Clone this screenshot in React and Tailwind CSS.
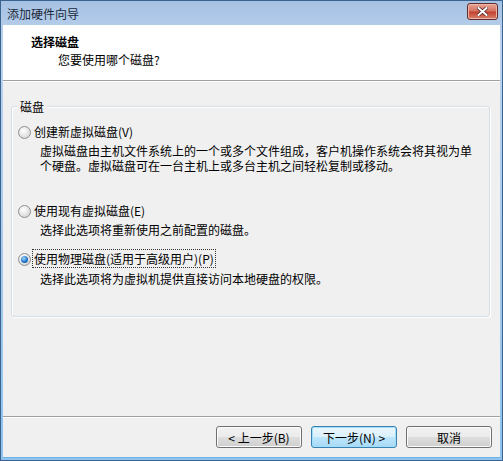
import React from "react";

function Radio({ checked }) {
  return (
    <span className="relative inline-block w-[13px] h-[13px] rounded-full border border-[#8f8f8f] bg-[radial-gradient(circle_at_40%_35%,#ffffff,#dcdcdc_70%,#c8c8c8)] shrink-0">
      {checked && (
        <span className="absolute left-[2px] top-[2px] w-[7px] h-[7px] rounded-full bg-[radial-gradient(circle_at_40%_35%,#9fd7ff,#1a6fc4_60%,#0d4f93)]" />
      )}
    </span>
  );
}

function Btn({ children, def }) {
  return (
    <div
      className={
        "w-[86px] h-[22px] rounded-[3px] border flex items-center justify-center text-[12px] leading-[15px] text-black " +
        (def
          ? "border-[#3c7fb1] bg-[linear-gradient(#eaf6fd_0%,#d9f0fc_50%,#bee6fd_51%,#a7d9f5_100%)] shadow-[inset_0_0_0_1px_#9fe0ff]"
          : "border-[#707070] bg-[linear-gradient(#f2f2f2_0%,#ebebeb_50%,#dddddd_51%,#cfcfcf_100%)] shadow-[inset_0_0_0_1px_#fcfcfc]")
      }
    >
      {children}
    </div>
  );
}

export default function App() {
  return (
    <div
      className="w-[503px] h-[461px] flex flex-col border border-[#3a6390] bg-[linear-gradient(#a5c1e3,#bcd3ee_40px,#8fc2ec_100%)] text-black"
      style={{ fontFamily: '"Noto Sans CJK SC", "Liberation Sans", sans-serif' }}
    >
      {/* title bar */}
      <div className="h-[24px] flex items-center justify-between pl-[6px] pr-[4px] shrink-0">
        <span className="text-[12px] leading-[15px] text-[#1e2a3a] pt-[1px]">添加硬件向导</span>
        <div className="w-[31px] h-[17px] mt-[-3px] rounded-[3px] border border-[#5e2a2a] bg-[linear-gradient(#e8a597_0%,#d47462_45%,#c3432f_55%,#d8806c_100%)] shadow-[inset_0_0_0_1px_#f0b7a8] flex items-center justify-center">
          <svg width="11" height="9" viewBox="0 0 11 9">
            <path d="M1.5 1 L9.5 8 M9.5 1 L1.5 8" stroke="#4a2020" strokeWidth="3.4" strokeLinecap="square" />
            <path d="M1.5 1 L9.5 8 M9.5 1 L1.5 8" stroke="#ffffff" strokeWidth="2" strokeLinecap="square" />
          </svg>
        </div>
      </div>

      {/* body */}
      <div className="flex-1 mx-[2px] mb-[2px] flex flex-col bg-[#f0f0f0] border-b border-[#6ab4e6]">
        {/* header */}
        <div className="h-[56px] bg-white border-b border-[#a0a0a0] shrink-0 pt-[9px]">
          <div className="pl-[28px] text-[12px] leading-[15px] font-bold">选择磁盘</div>
          <div className="pl-[55px] mt-[3px] text-[12px] leading-[15px]">您要使用哪个磁盘?</div>
        </div>
        <div className="h-px bg-white shrink-0" />

        {/* content */}
        <div className="flex-1 pt-[24px] pl-[8px] pr-[10px]">
          <div className="relative h-[211px] rounded-[3px] border border-[#d5dfe5] shadow-[inset_1px_1px_0_#ffffff,1px_1px_0_#ffffff] pt-[17px] pl-[8px]">
            <span className="absolute left-[5px] top-[-8px] px-[3px] bg-[#f0f0f0] text-[12px] leading-[15px]">磁盘</span>

            <div className="flex items-center gap-[2px] h-[15px]">
              <span className="ml-[-2px]"><Radio /></span>
              <span className="text-[12px] leading-[15px] ml-[1px]">创建新虚拟磁盘(V)</span>
            </div>
            <div className="mt-[4px] pl-[20px] text-[12px] leading-[15px] whitespace-nowrap">
              虚拟磁盘由主机文件系统上的一个或多个文件组成，客户机操作系统会将其视为单
            </div>
            <div className="pl-[20px] text-[12px] leading-[15px] whitespace-nowrap">
              个硬盘。虚拟磁盘可在一台主机上或多台主机之间轻松复制或移动。
            </div>

            <div className="flex items-center gap-[2px] h-[15px] mt-[30px]">
              <span className="ml-[-2px]"><Radio /></span>
              <span className="text-[12px] leading-[15px] ml-[1px]">使用现有虚拟磁盘(E)</span>
            </div>
            <div className="mt-[4px] pl-[20px] text-[12px] leading-[15px]">
              选择此选项将重新使用之前配置的磁盘。
            </div>

            <div className="flex items-center gap-[2px] h-[15px] mt-[14px]">
              <span className="ml-[-2px]"><Radio checked /></span>
              <span className="text-[12px] leading-[15px] ml-[1px] outline-1 outline-dotted outline-[#333] outline-offset-[1px]">使用物理磁盘(适用于高级用户)(P)</span>
            </div>
            <div className="mt-[5px] pl-[20px] text-[12px] leading-[15px]">
              选择此选项将为虚拟机提供直接访问本地硬盘的权限。
            </div>
          </div>
        </div>

        {/* footer */}
        <div className="h-px bg-[#a0a0a0] shrink-0" />
        <div className="h-px bg-white shrink-0" />
        <div className="h-[39px] shrink-0 flex justify-end items-start gap-[9px] pr-[8px] pt-[8px]">
          <Btn>&lt; 上一步(B)</Btn>
          <Btn def>下一步(N) &gt;</Btn>
          <Btn>取消</Btn>
        </div>
      </div>
    </div>
  );
}
